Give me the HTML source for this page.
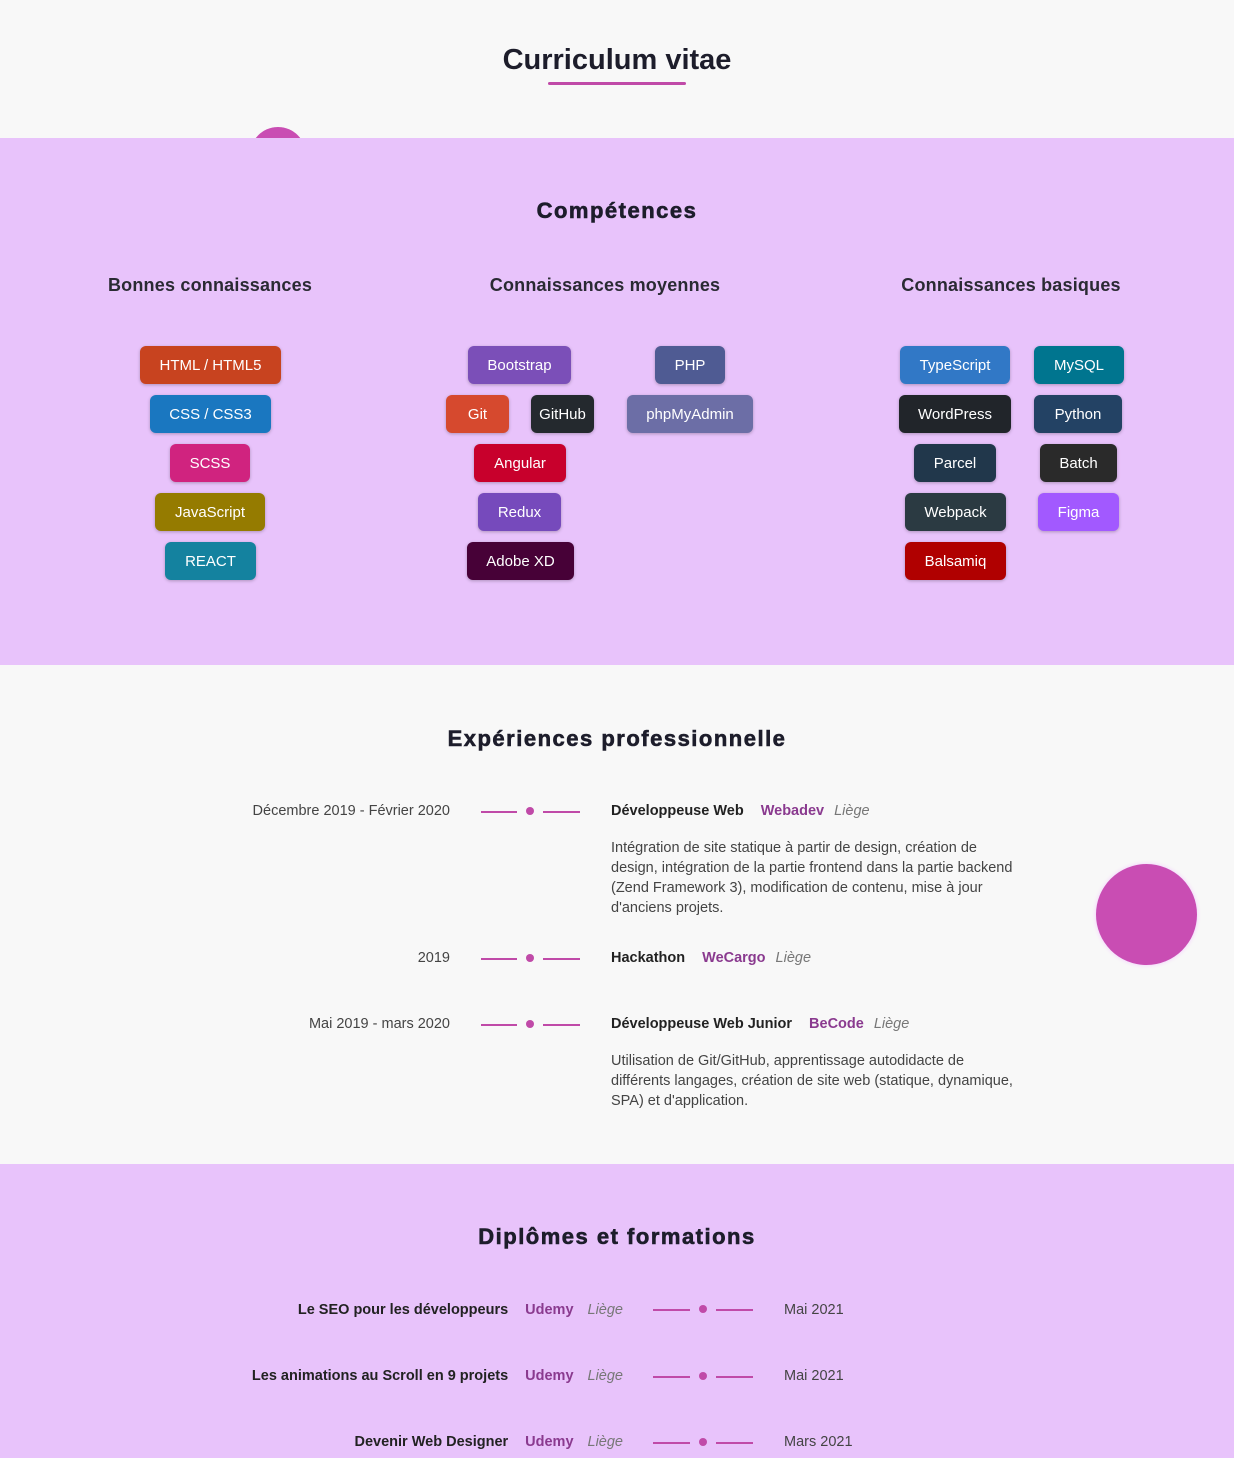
<!DOCTYPE html>
<html><head><meta charset="utf-8"><style>
*{margin:0;padding:0;box-sizing:border-box}
body{width:1234px;height:1458px;overflow:hidden;background:#f8f8f8;font-family:"Liberation Sans",Arial,sans-serif;color:#333;position:relative}
.abs{position:absolute}
.band{position:absolute;left:0;width:1234px;background:#e8c3fb}
h1,h2{position:absolute;left:0;width:1234px;text-align:center;color:#1d1d2b}
h1{top:44px;font-size:29px;font-weight:bold}
h2{font-size:22px;font-weight:900;letter-spacing:1.5px;-webkit-text-stroke:.6px #1d1d2b}
h3{position:absolute;font-size:18px;font-weight:bold;color:#2a2a33;text-align:center;width:300px;letter-spacing:.2px}
.b{position:absolute;height:38px;border-radius:6px;color:#fff;font-size:15px;display:flex;align-items:center;justify-content:center;box-shadow:0 1px 3px rgba(0,0,0,.25)}
.t{position:absolute;font-size:14.5px;color:#444}
.r{text-align:right}
.line{position:absolute;height:2px;background:#c04aa8}
.dot{position:absolute;width:8px;height:8px;border-radius:50%;background:#c04aa8}
.tt{font-weight:bold;color:#222}
.co{font-weight:bold;color:#8a3a8f;margin-left:14px}
.ci{font-style:italic;color:#777;margin-left:10px}
.desc{position:absolute;left:611px;width:415px;font-size:14.5px;line-height:20px;color:#444}
</style></head><body>
<h1>Curriculum vitae</h1>
<div class="abs" style="left:548px;top:82px;width:138px;height:3px;background:#c04aa8;border-radius:2px"></div>
<div class="abs" style="left:250px;top:127px;width:56px;height:56px;border-radius:50%;background:#c94db3"></div>
<div class="band" style="top:138px;height:527px"></div>
<h2 style="top:198px">Compétences</h2>
<h3 style="left:60px;top:275px">Bonnes connaissances</h3>
<h3 style="left:455px;top:275px">Connaissances moyennes</h3>
<h3 style="left:861px;top:275px">Connaissances basiques</h3>

<div class="b" style="left:140px;top:346px;width:141px;background:#c8431f">HTML / HTML5</div>
<div class="b" style="left:150px;top:395px;width:121px;background:#1a77c0">CSS / CSS3</div>
<div class="b" style="left:170px;top:444px;width:80px;background:#d0237f">SCSS</div>
<div class="b" style="left:155px;top:493px;width:110px;background:#957b00">JavaScript</div>
<div class="b" style="left:165px;top:542px;width:91px;background:#14829f">REACT</div>

<div class="b" style="left:468px;top:346px;width:103px;background:#7b4fb8">Bootstrap</div>
<div class="b" style="left:655px;top:346px;width:70px;background:#4f5b93">PHP</div>
<div class="b" style="left:446px;top:395px;width:63px;background:#d6492e">Git</div>
<div class="b" style="left:531px;top:395px;width:63px;background:#24292e">GitHub</div>
<div class="b" style="left:627px;top:395px;width:126px;background:#6c6ea6">phpMyAdmin</div>
<div class="b" style="left:474px;top:444px;width:92px;background:#c8002c">Angular</div>
<div class="b" style="left:478px;top:493px;width:83px;background:#764abc">Redux</div>
<div class="b" style="left:467px;top:542px;width:107px;background:#470137">Adobe XD</div>

<div class="b" style="left:900px;top:346px;width:110px;background:#3178c6">TypeScript</div>
<div class="b" style="left:1034px;top:346px;width:90px;background:#00758f">MySQL</div>
<div class="b" style="left:899px;top:395px;width:112px;background:#21252a">WordPress</div>
<div class="b" style="left:1034px;top:395px;width:88px;background:#234264">Python</div>
<div class="b" style="left:914px;top:444px;width:82px;background:#21374b">Parcel</div>
<div class="b" style="left:1040px;top:444px;width:77px;background:#2a2a2a">Batch</div>
<div class="b" style="left:905px;top:493px;width:101px;background:#2b3a42">Webpack</div>
<div class="b" style="left:1038px;top:493px;width:81px;background:#a259ff">Figma</div>
<div class="b" style="left:905px;top:542px;width:101px;background:#b00000">Balsamiq</div>

<h2 style="top:726px">Expériences professionnelle</h2>

<div class="t r" style="left:150px;width:300px;top:803px">Décembre 2019 - Février 2020</div>
<div class="line" style="left:481px;top:811px;width:36px"></div><div class="dot" style="left:526px;top:807px"></div><div class="line" style="left:543px;top:811px;width:37px"></div>
<div class="t" style="left:611px;top:803px"><span class="tt">Développeuse Web</span><span class="co" style="margin-left:17px">Webadev</span><span class="ci">Liège</span></div>
<div class="desc" style="top:838px">Intégration de site statique à partir de design, création de design, intégration de la partie frontend dans la partie backend (Zend Framework 3), modification de contenu, mise à jour d'anciens projets.</div>

<div class="t r" style="left:150px;width:300px;top:950px">2019</div>
<div class="line" style="left:481px;top:958px;width:36px"></div><div class="dot" style="left:526px;top:954px"></div><div class="line" style="left:543px;top:958px;width:37px"></div>
<div class="t" style="left:611px;top:950px"><span class="tt">Hackathon</span><span class="co" style="margin-left:17px">WeCargo</span><span class="ci">Liège</span></div>

<div class="t r" style="left:150px;width:300px;top:1016px">Mai 2019 - mars 2020</div>
<div class="line" style="left:481px;top:1024px;width:36px"></div><div class="dot" style="left:526px;top:1020px"></div><div class="line" style="left:543px;top:1024px;width:37px"></div>
<div class="t" style="left:611px;top:1016px"><span class="tt">Développeuse Web Junior</span><span class="co" style="margin-left:17px">BeCode</span><span class="ci">Liège</span></div>
<div class="desc" style="top:1051px">Utilisation de Git/GitHub, apprentissage autodidacte de différents langages, création de site web (statique, dynamique, SPA) et d'application.</div>

<div class="abs" style="left:1096px;top:864px;width:101px;height:101px;border-radius:50%;background:#c94db3;box-shadow:0 0 4px #f3c8ff"></div>

<div class="band" style="top:1164px;height:294px"></div>
<h2 style="top:1224px">Diplômes et formations</h2>

<div class="t r" style="left:100px;width:523px;top:1302px"><span class="tt">Le SEO pour les développeurs</span><span class="co" style="margin-left:17px">Udemy</span><span class="ci" style="margin-left:14px">Liège</span></div>
<div class="line" style="left:653px;top:1309px;width:37px"></div><div class="dot" style="left:699px;top:1305px"></div><div class="line" style="left:716px;top:1309px;width:37px"></div>
<div class="t" style="left:784px;top:1302px">Mai 2021</div>

<div class="t r" style="left:100px;width:523px;top:1368px"><span class="tt">Les animations au Scroll en 9 projets</span><span class="co" style="margin-left:17px">Udemy</span><span class="ci" style="margin-left:14px">Liège</span></div>
<div class="line" style="left:653px;top:1376px;width:37px"></div><div class="dot" style="left:699px;top:1372px"></div><div class="line" style="left:716px;top:1376px;width:37px"></div>
<div class="t" style="left:784px;top:1368px">Mai 2021</div>

<div class="t r" style="left:100px;width:523px;top:1434px"><span class="tt">Devenir Web Designer</span><span class="co" style="margin-left:17px">Udemy</span><span class="ci" style="margin-left:14px">Liège</span></div>
<div class="line" style="left:653px;top:1442px;width:37px"></div><div class="dot" style="left:699px;top:1438px"></div><div class="line" style="left:716px;top:1442px;width:37px"></div>
<div class="t" style="left:784px;top:1434px">Mars 2021</div>
</body></html>
